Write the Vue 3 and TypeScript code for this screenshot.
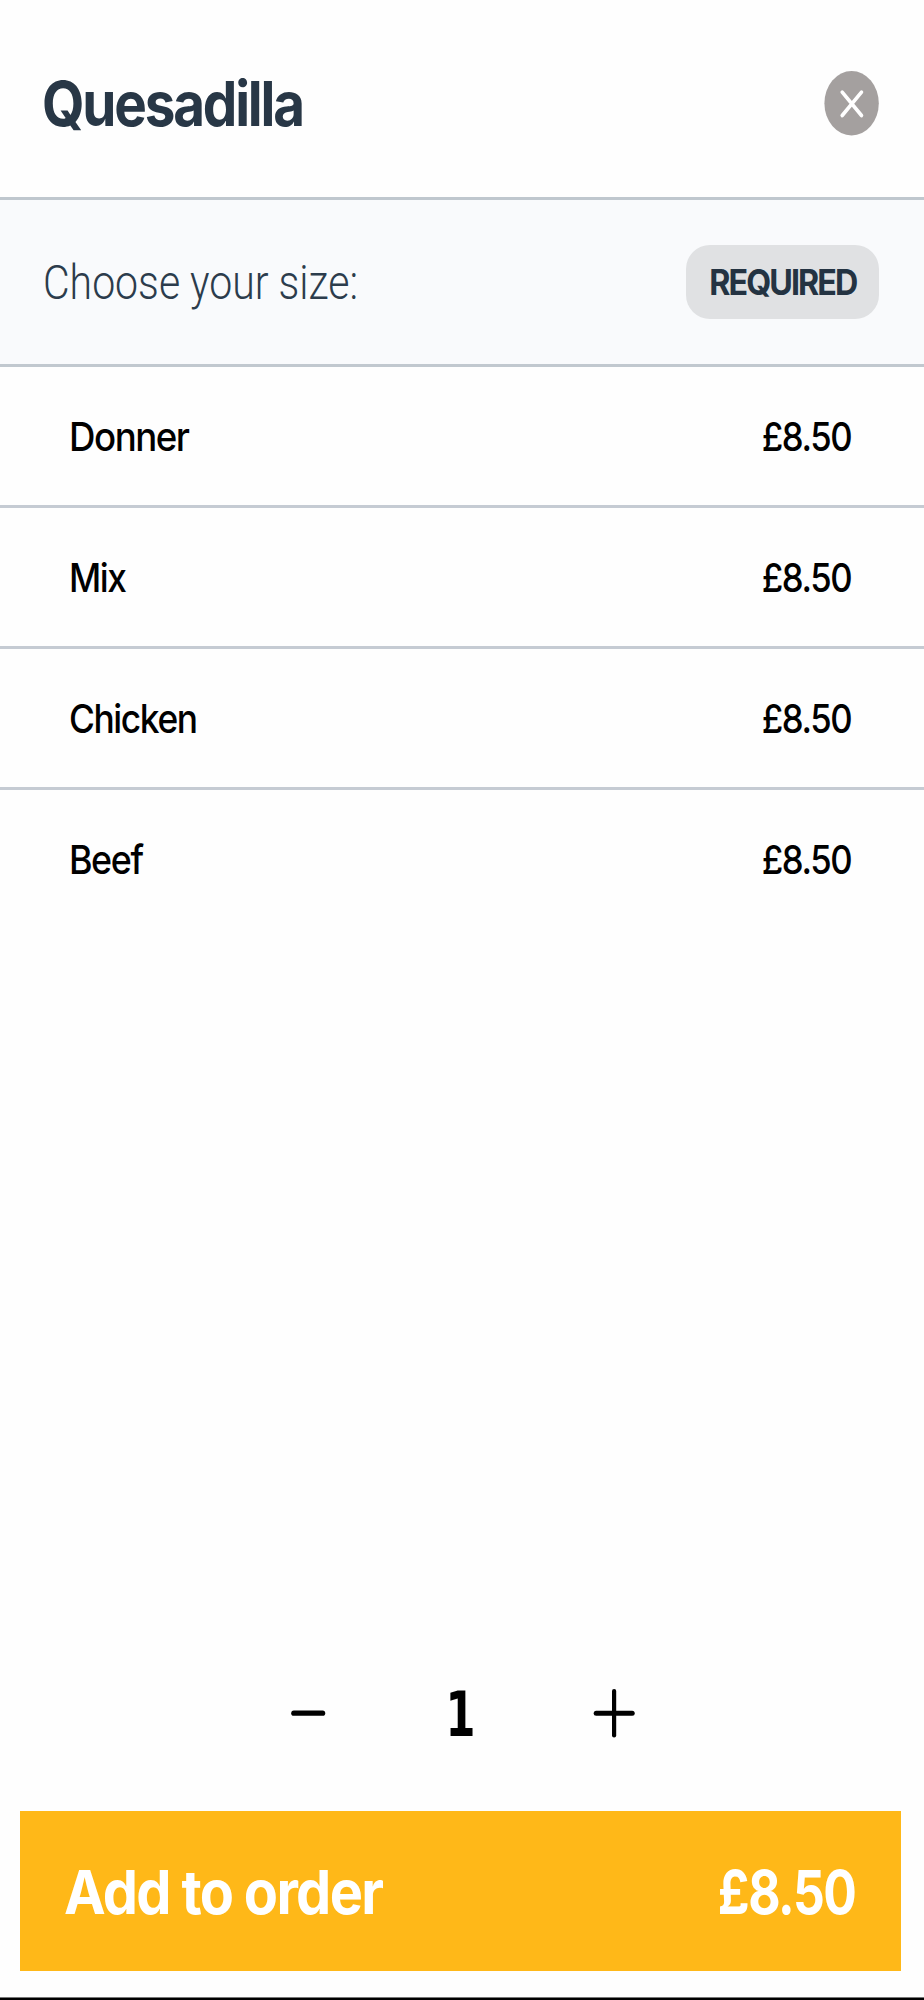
<script setup lang="ts">
import type { Directive } from 'vue'

interface Option {
  name: string
  width: number
  price: string
}

const options: Option[] = [
  { name: 'Donner', width: 121, price: '£8.50' },
  { name: 'Mix', width: 58, price: '£8.50' },
  { name: 'Chicken', width: 129, price: '£8.50' },
  { name: 'Beef', width: 75, price: '£8.50' },
]

// Condenses a label horizontally so that its glyphs take the given width.
// The tracking after the last glyph is left out of the measurement.
const vFit: Directive<HTMLElement, number> = {
  mounted(el, binding) {
    const tracking = parseFloat(getComputedStyle(el).letterSpacing) || 0
    const natural = el.getBoundingClientRect().width - tracking
    if (natural > 0) el.style.transform = `scaleX(${binding.value / natural})`
  },
}
</script>

<template>
  <main class="sheet">
    <header class="header">
      <h1 v-fit="263" class="title fit">Quesadilla</h1>
      <button class="close" aria-label="Close">
        <svg width="55" height="65" viewBox="0 0 55 65">
          <ellipse cx="27.6" cy="32.3" rx="27.2" ry="32.2" fill="#a4a09f" />
          <path d="M18.2 21.2 37.5 44.5M37.5 21.2 18.2 44.5" stroke="#fff" stroke-width="3.6" stroke-linecap="round" />
        </svg>
      </button>
    </header>

    <section class="group">
      <h2 v-fit="315" class="question fit">Choose your size:</h2>
      <span class="badge"><span v-fit="149" class="fit center">REQUIRED</span></span>
    </section>

    <ul class="options">
      <li v-for="option in options" :key="option.name" class="option">
        <span v-fit="option.width" class="fit">{{ option.name }}</span>
        <span v-fit="91" class="fit right">{{ option.price }}</span>
      </li>
    </ul>

    <div class="stepper">
      <button aria-label="Decrease">
        <svg width="56" height="56" viewBox="0 0 56 56">
          <path d="M13.8 28.2H42.6" stroke="#000" stroke-width="5.2" stroke-linecap="round" />
        </svg>
      </button>
      <span class="count"><span v-fit="30" class="fit center">1</span></span>
      <button aria-label="Increase">
        <svg width="56" height="56" viewBox="0 0 56 56">
          <path d="M10.2 28.2H46.2" stroke="#000" stroke-width="5" stroke-linecap="round" />
          <path d="M28.1 6V50.4" stroke="#000" stroke-width="4.2" stroke-linecap="round" />
        </svg>
      </button>
    </div>

    <button class="submit">
      <span v-fit="320" class="fit">Add to order</span>
      <span v-fit="139" class="fit right">£8.50</span>
    </button>
    <div class="edge"></div>
  </main>
</template>

<style>
body {
  background: #fefefe;
}
</style>

<style scoped>
.sheet {
  box-sizing: border-box;
  display: flex;
  flex-direction: column;
  width: 924px;
  height: 2000px;
  overflow: hidden;
  background: #fefefe;
  color: #000;
  font-family: Inter, 'Liberation Sans', sans-serif;
}
h1,
h2,
ul {
  margin: 0;
  padding: 0;
}
button {
  padding: 0;
  border: 0;
  background: none;
  font: inherit;
}
svg {
  display: block;
  fill: none;
}
.fit {
  display: block;
  white-space: nowrap;
  transform-origin: left center;
}
.right {
  transform-origin: right center;
}
.center {
  transform-origin: center;
}
.header {
  box-sizing: border-box;
  display: flex;
  justify-content: space-between;
  align-items: center;
  height: 200px;
  padding: 10px 45px 0 42px;
  border-bottom: 3px solid #bfc7ce;
}
.title {
  padding-top: 1px;
  color: #283746;
  font-size: 62px;
  font-weight: 700;
  letter-spacing: -0.04em;
  line-height: 80px;
}
.group {
  box-sizing: border-box;
  display: flex;
  justify-content: space-between;
  align-items: center;
  height: 167px;
  padding: 0 45px 0 43px;
  border-bottom: 3px solid #c1c8cf;
  background: #f9fafc;
}
.question {
  padding-top: 2px;
  color: #2c3c4c;
  font-family: Roboto, sans-serif;
  font-size: 49px;
  font-weight: 300;
  line-height: 60px;
}
.badge {
  display: flex;
  justify-content: center;
  align-items: center;
  width: 193px;
  height: 74px;
  border-radius: 24px;
  background: #e0e1e3;
  color: #243342;
  font-size: 35px;
  font-weight: 700;
  letter-spacing: -0.06em;
}
.options {
  list-style: none;
}
.option {
  box-sizing: border-box;
  display: flex;
  justify-content: space-between;
  align-items: center;
  height: 141px;
  padding: 1px 73px 0 68.5px;
  border-bottom: 3px solid #c5cbd3;
  font-size: 40px;
  font-weight: 500;
  letter-spacing: -0.04em;
}
.option:last-child {
  border-bottom-color: transparent;
}
.stepper {
  display: flex;
  justify-content: center;
  align-items: center;
  gap: 97px;
  height: 80px;
  margin-top: auto;
  padding-right: 3px;
}
.count {
  display: flex;
  justify-content: center;
  width: 56px;
  padding-top: 3px;
  font-family: 'DejaVu Sans', sans-serif;
  font-size: 62px;
  font-weight: 700;
  line-height: 80px;
}
.submit {
  display: flex;
  flex: none;
  justify-content: space-between;
  align-items: center;
  height: 160px;
  margin: 58px 23px 26px 20px;
  padding: 2px 46px 0 44px;
  background: #ffb818;
  color: #fff;
  font-size: 61px;
  font-weight: 700;
  letter-spacing: -0.03em;
}
.edge {
  flex: none;
  height: 3px;
  border-top: 1px solid #777;
  box-sizing: border-box;
  background: #000;
}
</style>
